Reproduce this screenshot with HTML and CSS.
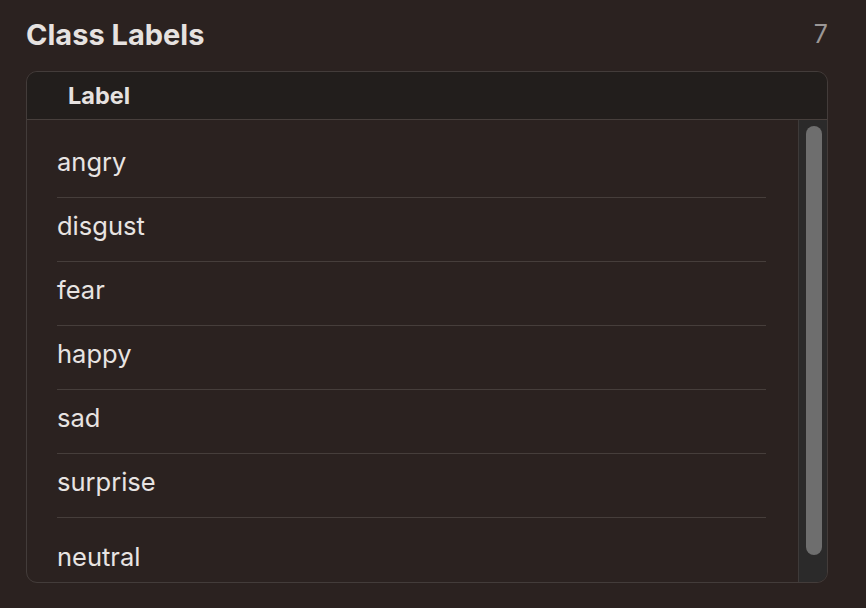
FILE: index.html
```html
<!DOCTYPE html>
<html>
<head>
<meta charset="utf-8">
<link rel="stylesheet" href="styles.css">
</head>
<body>
<div class="panel">
  <div class="title-row">
    <h1 class="title">Class Labels</h1>
    <span class="count">7</span>
  </div>
  <div class="table">
    <div class="thead"><span class="th">Label</span></div>
    <div class="tbody">
      <ul class="list">
        <li class="row">angry</li>
        <li class="row">disgust</li>
        <li class="row">fear</li>
        <li class="row">happy</li>
        <li class="row">sad</li>
        <li class="row">surprise</li>
        <li class="row row-last">neutral</li>
      </ul>
      <div class="track"><div class="thumb"></div></div>
    </div>
  </div>
</div>
</body>
</html>
```

FILE: styles.css
```css
* { box-sizing: border-box; }
html, body {
  margin: 0;
  padding: 0;
  background: #2b2220;
  width: 866px;
  height: 608px;
  overflow: hidden;
  font-family: "Inter", "Liberation Sans", sans-serif;
  color: #e8e4e2;
}
.panel {
  padding: 16px 38px 0 26px;
}
.title-row {
  display: flex;
  justify-content: space-between;
  align-items: center;
  height: 36px;
}
.title {
  margin: 0;
  font-size: 29px;
  font-weight: 700;
  color: #e6e2e0;
}
.count {
  font-size: 25px;
  color: #9b9796;
  font-weight: 400;
}
.table {
  margin-top: 19px;
  height: 512px;
  border: 1px solid #433c3a;
  border-radius: 11px;
  overflow: hidden;
  display: flex;
  flex-direction: column;
}
.thead {
  height: 48px;
  flex: none;
  background: #221e1c;
  border-bottom: 1px solid #473f3c;
  display: flex;
  align-items: center;
  padding-left: 41px;
  padding-bottom: 1px;
}
.th {
  font-size: 23.5px;
  font-weight: 700;
  color: #e6e2e0;
}
.tbody {
  flex: 1;
  display: flex;
  min-height: 0;
}
.list {
  flex: 1;
  list-style: none;
  margin: 0;
  padding: 14px 32px 0 30px;
  overflow: hidden;
}
.row {
  height: 64px;
  border-bottom: 1px solid #463e3b;
  display: flex;
  align-items: center;
  padding-bottom: 9px;
  font-size: 25.5px;
  color: #e8e4e2;
}
.row-last {
  border-bottom: none;
  padding-top: 22px;
}
.track {
  width: 29px;
  flex: none;
  background: #2b2a2a;
  border-left: 1px solid #3e3a39;
  padding: 6px 0 0 7px;
}
.thumb {
  width: 16px;
  height: 429px;
  border-radius: 8px;
  background: #6e6e6e;
}
```
